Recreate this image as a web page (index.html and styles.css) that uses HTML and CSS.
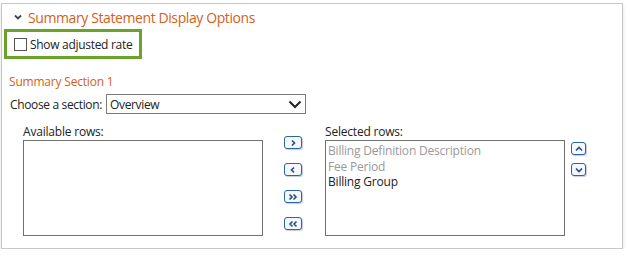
FILE: index.html
```html
<!DOCTYPE html>
<html lang="en">
<head>
    <meta charset="UTF-8">
    <title>Summary Statement Display Options</title>
    <link rel="stylesheet" href="styles.css">
</head>
<body>

<div class="panel">
    <!-- section header -->
    <div class="panel-head">
        <svg class="chev" width="8" height="6" viewBox="0 0 8 6"><path d="M1 1.5 L4 4.5 L7 1.5" fill="none" stroke="#444" stroke-width="1.8"/></svg>
        <span class="panel-title">Summary Statement Display Options</span>
    </div>

    <label class="adjust">
        <span class="check"></span>
        <span>Show adjusted rate</span>
    </label>

    <div class="sub-title">Summary Section 1</div>

    <div class="choose-row">
        <span>Choose a section:</span>
        <div class="select">
            <span>Overview</span>
            <svg width="14" height="9" viewBox="0 0 14 9"><path d="M1.5 1.5 L7 7 L12.5 1.5" fill="none" stroke="#222" stroke-width="2"/></svg>
        </div>
    </div>

    <div class="lists">
        <div class="list-col">
            <div class="list-label">Available rows:</div>
            <div class="listbox"></div>
        </div>

        <div class="move-btns">
            <span class="btn"><svg width="10" height="8" viewBox="0 0 10 8"><path d="M4 1.5 L6.5 4 L4 6.5" fill="none" stroke="#1d4f86" stroke-width="1.6"/></svg></span>
            <span class="btn"><svg width="10" height="8" viewBox="0 0 10 8"><path d="M6 1.5 L3.5 4 L6 6.5" fill="none" stroke="#1d4f86" stroke-width="1.6"/></svg></span>
            <span class="btn"><svg width="12" height="8" viewBox="0 0 12 8"><path d="M2.5 1.5 L5 4 L2.5 6.5 M6.5 1.5 L9 4 L6.5 6.5" fill="none" stroke="#1d4f86" stroke-width="1.6"/></svg></span>
            <span class="btn"><svg width="12" height="8" viewBox="0 0 12 8"><path d="M5.5 1.5 L3 4 L5.5 6.5 M9.5 1.5 L7 4 L9.5 6.5" fill="none" stroke="#1d4f86" stroke-width="1.6"/></svg></span>
        </div>

        <div class="list-col">
            <div class="list-label">Selected rows:</div>
            <div class="listbox">
                <div class="item muted">Billing Definition Description</div>
                <div class="item muted">Fee Period</div>
                <div class="item">Billing Group</div>
            </div>
        </div>

        <div class="order-btns">
            <span class="btn small"><svg width="10" height="8" viewBox="0 0 10 8"><path d="M2 5.5 L5 2.5 L8 5.5" fill="none" stroke="#1d4f86" stroke-width="1.6"/></svg></span>
            <span class="btn small"><svg width="10" height="8" viewBox="0 0 10 8"><path d="M2 2.5 L5 5.5 L8 2.5" fill="none" stroke="#1d4f86" stroke-width="1.6"/></svg></span>
        </div>
    </div>
</div>

</body>
</html>
```

FILE: styles.css
```css
* {
    margin: 0;
    padding: 0;
    box-sizing: border-box;
}

body {
    background: #fff;
    font-family: "Open Sans", "Noto Sans", sans-serif;
    font-size: 12px;
    color: #222;
}

/* outer frame */
.panel {
    margin: 3px 0 0 1px;
    width: 622px;
    height: 246px;
    border: 1px solid #c6c6c6;
    box-shadow: 0 3px 4px rgba(0, 0, 0, 0.12);
}

.panel-head {
    display: flex;
    align-items: center;
    height: 25px;
    padding-left: 12px;
    padding-top: 1px;
}

.chev {
    margin-right: 6px;
}

.panel-title {
    color: #d4601a;
    font-size: 14px;
    letter-spacing: -0.4px;
}

/* highlighted checkbox */
.adjust {
    display: inline-flex;
    align-items: center;
    margin-left: 2px;
    width: 138px;
    height: 30px;
    padding-left: 7px;
    border: 3px solid #6aa329;
    font-size: 12px;
    letter-spacing: -0.3px;
}

.check {
    width: 13px;
    height: 13px;
    border: 1px solid #555;
    margin-right: 3px;
}

.sub-title {
    margin: 14px 0 0 7px;
    color: #d4601a;
    font-size: 12px;
    letter-spacing: -0.2px;
}

.choose-row {
    display: flex;
    align-items: center;
    margin: 4px 0 0 8px;
    letter-spacing: -0.35px;
}

.select {
    display: flex;
    align-items: center;
    justify-content: space-between;
    width: 200px;
    height: 20px;
    margin-left: 4px;
    padding: 0 3px;
    border: 1px solid #7a7a7a;
}

.lists {
    display: flex;
    margin: 9px 0 0 21px;
}

.list-label {
    height: 17px;
    letter-spacing: -0.2px;
}

.listbox {
    width: 240px;
    height: 96px;
    border: 1px solid #707070;
    padding: 2px 2px;
}

.item {
    line-height: 15.5px;
    font-size: 12px;
    letter-spacing: -0.2px;
}

.muted {
    color: #999;
}

/* transfer buttons */
.move-btns {
    display: flex;
    flex-direction: column;
    gap: 14px;
    margin: 13px 23px 0 21px;
}

.order-btns {
    display: flex;
    flex-direction: column;
    gap: 8px;
    margin: 19px 0 0 6px;
}

.btn {
    display: flex;
    align-items: center;
    justify-content: center;
    width: 18px;
    height: 13px;
    border: 1.5px solid #2f64a0;
    border-radius: 3px;
    background: #f4f7fb;
    box-shadow: 1px 1px 1px rgba(90, 110, 140, 0.35);
}

.btn.small {
    width: 15px;
}
```
